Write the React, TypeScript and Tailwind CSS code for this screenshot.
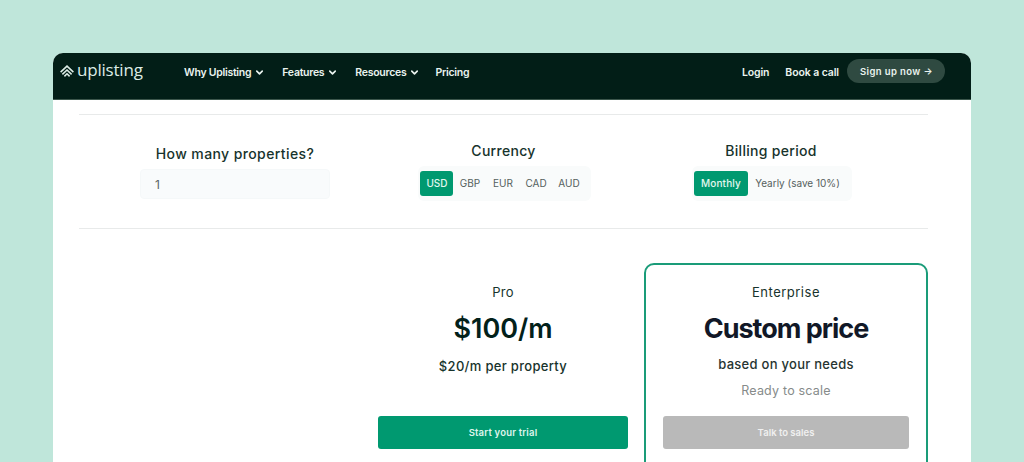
import { useState } from 'react'
import { ChevronDown } from 'lucide-react'

const NAV = [
  { label: 'Why Uplisting', menu: true },
  { label: 'Features', menu: true },
  { label: 'Resources', menu: true },
]

const CURRENCIES = ['USD', 'GBP', 'EUR', 'CAD', 'AUD']

function Logo() {
  return (
    <div className="flex items-center text-[#dcebe5]">
      <svg viewBox="0 0 14 12" className="mt-0.5 h-3 w-3.5" fill="none" stroke="currentColor" strokeWidth="1.6">
        <path d="M0.6 7.2 7 1.2l6.4 6" />
        <path d="M2.4 9.4 7 5l4.6 4.4" />
        <path d="M4.4 11.4 7 8.8l2.6 2.6" />
      </svg>
      <span className="ml-[3px] font-['Open_Sans',sans-serif] text-[17px] leading-5 font-normal tracking-[-0.2px]">
        uplisting
      </span>
    </div>
  )
}

function Header() {
  return (
    <header className="flex h-[47px] items-start border-b border-[#3c564c] bg-[#021e17] pl-[7px] text-[10.5px] font-semibold whitespace-nowrap text-[#eaf3ef]">
      <div className="mt-[7px] w-[124px]">
        <Logo />
      </div>
      <nav className="mt-[11px] flex h-[18px] items-center tracking-[-0.27px]">
        {NAV.map(({ label }) => (
          <a key={label} className="mr-[17px] flex items-center gap-[3px] last-of-type:mr-0">
            {label}
            <ChevronDown className="-mt-0.5 h-[11px] w-[11px]" strokeWidth={3.6} />
          </a>
        ))}
      </nav>
      <a className="mt-[11px] ml-[15px] leading-[18px] tracking-[-0.27px]">Pricing</a>
      <div className="mt-1.5 mr-[26px] ml-auto flex items-center">
        <a className="mt-[3px] tracking-[-0.15px]">Login</a>
        <a className="mt-[3px] ml-4 tracking-[-0.1px]">Book a call</a>
        <a className="ml-2 flex h-6 w-[98px] items-center justify-center rounded-full bg-[#2f4a41] pt-0.5 pl-px text-[9.5px] tracking-[0.4px]">
          Sign up now →
        </a>
      </div>
    </header>
  )
}

export default function App() {
  const [currency, setCurrency] = useState('USD')
  const [period, setPeriod] = useState('monthly')

  return (
    <div className="h-[462px] overflow-hidden bg-[#bfe6da] pt-[53px] font-['Inter',sans-serif]">
      <div className="ml-[53px] h-[409px] w-[918px] overflow-hidden rounded-t-[10px] bg-white">
        <Header />

        <main className="mt-3.5 ml-[26px] w-[849px] whitespace-nowrap text-[#17332c]">
          <section className="flex h-[115px] items-start border-y border-[#e8eaea] pl-[61px]">
            <div className="mt-[29px] flex w-[190px] flex-col items-center">
              <label className="text-[14px] leading-5 font-medium tracking-[0.4px]">How many properties?</label>
              <input
                defaultValue="1"
                className="mt-[5px] h-[30px] w-full rounded border border-[#f5f8f9] bg-[#f9fbfc] px-3.5 text-[12px] text-[#5c6663] outline-none"
              />
            </div>

            <div className="mt-[26px] ml-[88px] flex w-[173px] flex-col items-center">
              <div className="-ml-0.5 text-[14px] leading-5 font-medium tracking-[0.3px]">Currency</div>
              <div className="mt-[5px] flex h-[35px] w-full items-center rounded-md bg-[#f9fbfb] pl-0.5 text-[10px]">
                {CURRENCIES.map((code) => (
                  <button
                    key={code}
                    onClick={() => setCurrency(code)}
                    className={`h-[25px] w-[33px] rounded-[3px] pl-px ${
                      code === currency ? 'bg-[#009970] font-medium text-[#e3f7ef]' : 'text-[#55605d]'
                    }`}
                  >
                    {code}
                  </button>
                ))}
              </div>
            </div>

            <div className="mt-[26px] ml-[101px] flex w-[160px] flex-col items-center">
              <div className="-ml-0.5 text-[14px] leading-5 font-medium tracking-[0.3px]">Billing period</div>
              <div className="mt-[5px] flex h-[35px] w-full items-center rounded-md bg-[#f9fbfb] pl-0.5 text-[10px]">
                <button
                  onClick={() => setPeriod('monthly')}
                  className={`h-[25px] w-[54px] rounded-[3px] tracking-[0.15px] ${
                    period === 'monthly' ? 'bg-[#009970] font-medium text-[#e3f7ef]' : 'text-[#55605d]'
                  }`}
                >
                  Monthly
                </button>
                <button
                  onClick={() => setPeriod('yearly')}
                  className={`h-[25px] w-[99px] rounded-[3px] ${
                    period === 'yearly' ? 'bg-[#009970] font-medium text-[#e3f7ef]' : 'text-[#55605d]'
                  }`}
                >
                  Yearly (save 10%)
                </button>
              </div>
            </div>
          </section>

          <section className="mt-[34px] flex pl-[299px]">
            <div className="flex w-[250px] flex-col items-center pt-[19px]">
              <h3 className="text-[13px] leading-5 tracking-[0.3px]">Pro</h3>
              <p className="mt-[9px] text-[27px] leading-9 font-semibold text-[#02211a]">$100/m</p>
              <p className="mt-[9px] text-[13px] leading-5 font-medium tracking-[0.32px]">$20/m per property</p>
              <button className="mt-10 h-[33px] w-full rounded-[3px] bg-[#009970] pt-px text-[9.5px] font-semibold tracking-[0.2px] text-[#dff5ec]">
                Start your trial
              </button>
            </div>

            <div className="ml-4 flex h-[240px] w-[284px] flex-col items-center rounded-[10px] border-2 border-[#1a9c79] px-[17px] pt-[17px]">
              <h3 className="text-[13px] leading-5 tracking-[0.5px]">Enterprise</h3>
              <p className="mt-[9px] text-[27px] leading-9 font-bold tracking-[-1px] text-[#111827]">Custom price</p>
              <p className="mt-[7px] text-[13px] leading-5 font-medium tracking-[0.27px] text-[#263431]">based on your needs</p>
              <p className="mt-[7px] text-[12.5px] leading-5 tracking-[0.2px] text-[#868b8a]">Ready to scale</p>
              <button className="mt-[15px] h-[33px] w-full rounded-[3px] bg-[#b9b9b9] pt-px text-[9.5px] font-semibold text-[#f0f0f0]">
                Talk to sales
              </button>
            </div>
          </section>
        </main>
      </div>
    </div>
  )
}
